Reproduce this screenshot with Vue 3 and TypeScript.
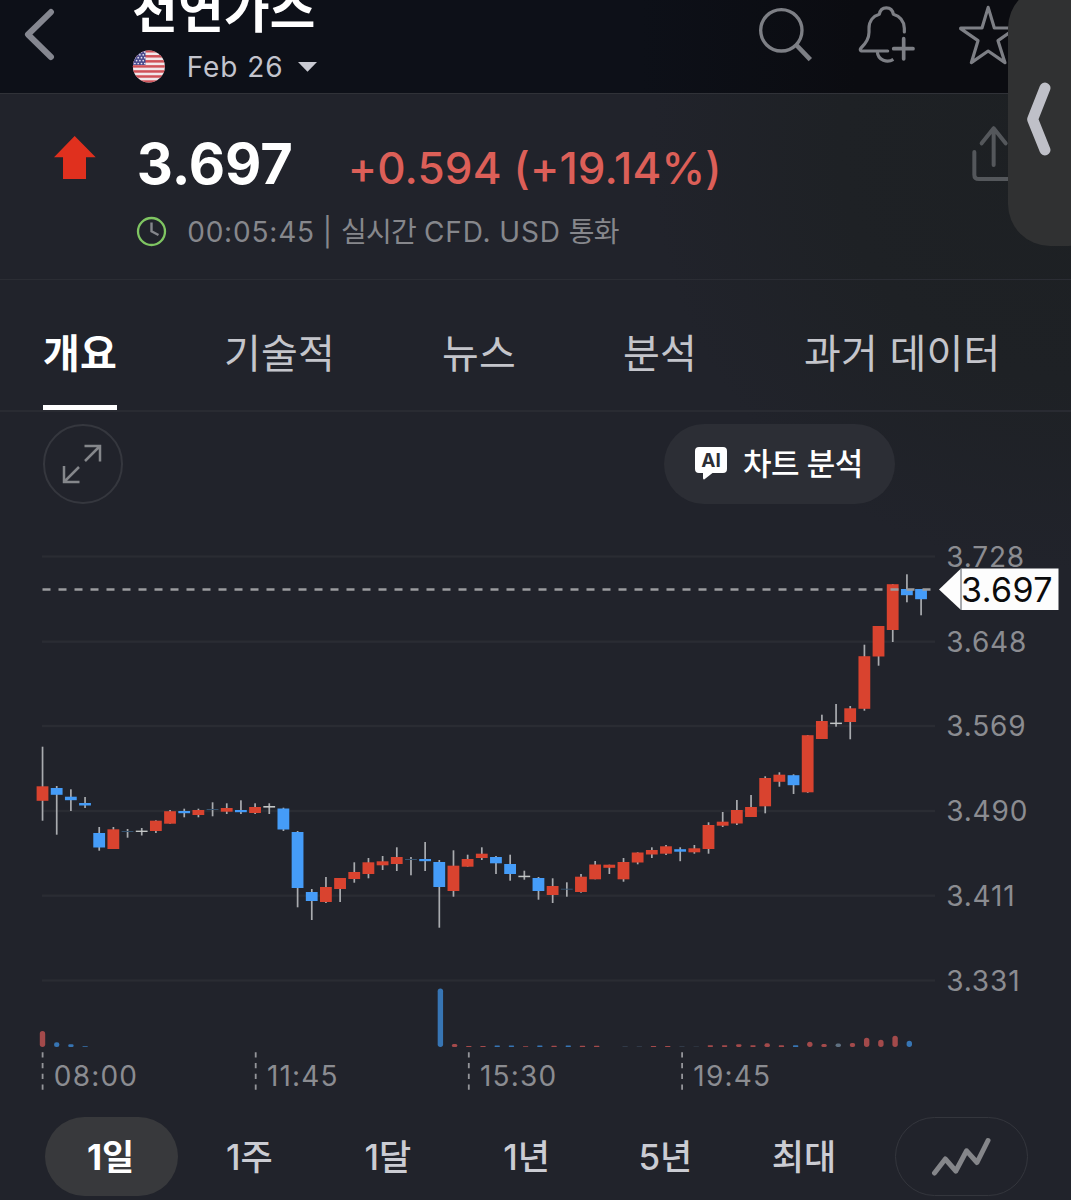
<script setup lang="ts">
type Tone = 'up' | 'down' | 'flat' | 'dim'
type Candle = [high: number, top: number, bottom: number, low: number, tone: Tone]
type Volume = [index: number, top: number, tone: Tone]

const tabs = ['개요', '기술적', '뉴스', '분석', '과거 데이터']
const ranges = ['1일', '1주', '1달', '1년', '5년', '최대']

const grid = [
  { y: 556.5, label: '3.728' },
  { y: 641.7, label: '3.648' },
  { y: 726, label: '3.569' },
  { y: 811, label: '3.490' },
  { y: 895.7, label: '3.411' },
  { y: 980.5, label: '3.331' },
]

const times = [
  { x: 42.6, label: '08:00' },
  { x: 255.7, label: '11:45' },
  { x: 468.8, label: '15:30' },
  { x: 682.1, label: '19:45' },
]

const candles: Candle[] = [
  [746.7, 786.3, 800.8, 820.7, 'up'],
  [786, 788, 794.8, 834.7, 'down'],
  [789.3, 796.7, 800.2, 811, 'down'],
  [797, 803, 805.5, 808, 'down'],
  [827, 833, 847.5, 850.7, 'down'],
  [827, 829.3, 849, 849, 'up'],
  [829, 831, 832, 837.7, 'dim'],
  [828, 830.6, 832, 835.5, 'flat'],
  [820.3, 820.7, 831, 833, 'up'],
  [810, 811.2, 823.7, 823.7, 'up'],
  [808.7, 811, 813.2, 817.3, 'down'],
  [808.7, 810, 815, 817.3, 'up'],
  [802.3, 809, 810, 816.3, 'dim'],
  [803.3, 808, 811.7, 814, 'up'],
  [800.3, 810, 812.2, 814, 'down'],
  [803.3, 807, 813, 814, 'up'],
  [803.3, 806, 807.6, 814, 'flat'],
  [807.7, 808.5, 829.5, 831, 'down'],
  [831, 832, 888, 907.3, 'down'],
  [889, 892, 901, 920, 'down'],
  [877, 887, 902, 903, 'up'],
  [878, 878, 889, 902, 'up'],
  [862.3, 872, 879, 882.7, 'up'],
  [858, 862.3, 874, 878.3, 'up'],
  [856, 861.3, 865.3, 870, 'up'],
  [847.3, 857, 864, 871, 'up'],
  [857, 859, 860, 875.3, 'dim'],
  [842, 859, 861.2, 871, 'down'],
  [860, 862, 887, 927.7, 'down'],
  [850.3, 865.7, 891, 896.7, 'up'],
  [854.7, 859, 866.7, 866.7, 'up'],
  [847.3, 853.7, 858, 860, 'up'],
  [856, 857, 863.3, 874, 'down'],
  [854.7, 864, 874, 880.7, 'down'],
  [870.7, 875.7, 877.2, 879.7, 'flat'],
  [877, 878, 891, 899.7, 'down'],
  [878.3, 886, 895, 903, 'up'],
  [882.3, 888.7, 889.7, 896.7, 'dim'],
  [874, 876.7, 892, 892.7, 'up'],
  [861, 864.5, 879.3, 879.3, 'up'],
  [864.7, 864.7, 867.8, 874, 'up'],
  [858, 862, 879.3, 881.7, 'up'],
  [852.3, 852.5, 862.5, 864.3, 'up'],
  [847.3, 850, 854.5, 858, 'up'],
  [845, 846.3, 853.7, 855, 'up'],
  [847.3, 849.2, 851.7, 861.2, 'down'],
  [845, 848.3, 852.3, 853.7, 'up'],
  [822.3, 825, 849, 853.7, 'up'],
  [812, 821.7, 825.7, 827, 'up'],
  [800, 810, 823.5, 825, 'up'],
  [795, 807, 817, 817, 'up'],
  [776.3, 778, 806.3, 813.3, 'up'],
  [772.3, 774.7, 781.8, 786.7, 'up'],
  [774.3, 775.2, 785.2, 794, 'down'],
  [735, 735.2, 792.3, 792.8, 'up'],
  [714.7, 721, 739, 739, 'up'],
  [704, 722.6, 724.1, 726.7, 'flat'],
  [706, 708.3, 722, 739.3, 'up'],
  [644.7, 656.2, 708.8, 710.7, 'up'],
  [626, 626, 656.5, 665.7, 'up'],
  [584, 584.2, 630, 642, 'up'],
  [574.3, 589, 595.2, 602.3, 'down'],
  [589, 589, 599.2, 615.3, 'down'],
]

const volumes: Volume[] = [
  [0, 1031, 'up'], [1, 1042.3, 'down'], [2, 1044.3, 'down'], [3, 1046.2, 'down'],
  [28, 988.5, 'down'], [29, 1044, 'up'], [30, 1046, 'up'], [31, 1046, 'up'],
  [32, 1045.6, 'down'], [33, 1045.6, 'down'], [34, 1046.2, 'up'], [35, 1045.6, 'down'],
  [36, 1045.8, 'up'], [37, 1045.6, 'down'], [38, 1045.8, 'up'], [39, 1045.8, 'up'],
  [41, 1046.3, 'dim'], [42, 1046.3, 'dim'], [43, 1045.9, 'up'], [44, 1046, 'up'],
  [45, 1046.2, 'dim'], [46, 1046.4, 'dim'], [47, 1045.2, 'up'], [48, 1045.2, 'up'],
  [49, 1044.2, 'up'], [50, 1045.2, 'up'], [51, 1043.3, 'up'], [52, 1045.3, 'up'],
  [53, 1045.3, 'down'], [54, 1041.7, 'up'], [55, 1044, 'up'], [56, 1043.6, 'flat'],
  [57, 1043, 'up'], [58, 1037.7, 'up'], [59, 1039.7, 'up'], [60, 1035.7, 'up'],
  [61, 1040.8, 'down'],
]

const volumeBase = 1047
const candleX = (i: number): number => 42.5 + i * 14.17
const volumeX = (i: number): number => 42.5 + i * 14.21
const volumeRadius = (top: number): number => Math.min(2.7, (volumeBase - top) / 2)
</script>

<template>
  <main class="screen">
    <header class="topbar">
      <svg class="back" viewBox="72 24 94 158" width="31.3" height="52.7">
        <path d="M153 36 84 103.500 153 171" />
      </svg>
      <div class="heading">
        <h1>천연가스</h1>
        <div class="contract">
          <svg class="flag" width="33" height="33" viewBox="0 0 33 33">
            <defs><clipPath id="flag-round"><circle cx="16.900" cy="16.500" r="16" /></clipPath></defs>
            <g clip-path="url(#flag-round)">
              <rect width="33" height="33" fill="#f1e8ea" />
              <rect v-for="n in 7" :key="n" x="0" :y="(n - 1) * 5.05" width="33" height="2.500" fill="#cf5157" />
              <rect width="13.500" height="15" fill="#4a4b8c" />
              <template v-for="r in 5" :key="r">
                <circle v-for="c in 4" :key="c" :cx="c * 3.3 - (r % 2 ? 0.4 : 2)" :cy="r * 2.9 - 1" r="0.850" fill="#e8e6f2" />
              </template>
            </g>
          </svg>
          <span class="month">Feb 26</span>
          <svg class="caret" width="19" height="10" viewBox="0 0 19 10"><path d="M0 0H19L9.500 9.700Z" /></svg>
        </div>
      </div>
      <div class="actions">
        <svg viewBox="114 14 168 180" width="56" height="60">
          <circle cx="184" cy="90" r="62" stroke-width="10" />
          <path d="M229 134 271 178" stroke-width="14" />
        </svg>
        <svg viewBox="412 14 176 180" width="58.7" height="60">
          <path class="round" stroke-width="9.500" d="M504 152H425Q419 150 424 143C440 128 448 116 448 96V84C448 62 461 47 479 42C481 29 490 22.500 500 22.500S519 29 521 42C541 48 553 62 554 84V95" />
          <path stroke-width="9.500" d="M473 155C475 180 503 189 521 177" />
          <path class="round" stroke-width="11" d="M552 115V176M522 145H580" />
        </svg>
        <svg viewBox="714 14 180 180" width="60" height="60">
          <path class="round" stroke-width="9.500" d="M804.500 21 823 83H888L834 121 855 187 804.500 152 754 187 774 121 722 85 722 83H786Z" />
        </svg>
      </div>
    </header>

    <section class="quote">
      <svg class="arrow" viewBox="162 408 125 129" width="41.7" height="43"><path d="M224 408 287 472H258V537H189V472H162Z" /></svg>
      <div class="figures">
        <div class="price-row">
          <strong class="last">3.697</strong>
          <span class="change">+0.594 (+19.14%)</span>
        </div>
        <div class="meta">
          <svg width="31" height="31" viewBox="0 0 31 31">
            <circle cx="15.500" cy="15.500" r="13.500" fill="none" stroke="#7fc562" stroke-width="2.300" />
            <path d="M15.500 6.500V15.300L22.500 19" fill="none" stroke="#85868c" stroke-width="2.400" />
          </svg>
          <p>00:05:45 | <span>실시간</span> CFD. USD <span>통화</span></p>
        </div>
      </div>
      <svg class="share" viewBox="756 376 130 170" width="43.3" height="56.7">
        <path d="M821 386V496M785 431 821 386 857 431M763 457V525Q763 538 777 538H865Q879 538 879 525V457" />
      </svg>
    </section>

    <nav class="tabs">
      <a v-for="(tab, i) in tabs" :key="tab" :class="{ active: i === 0 }">{{ tab }}</a>
    </nav>

    <div class="tools">
      <button class="expand" type="button">
        <svg width="40" height="40" viewBox="0 0 40 40"><path d="M23 17 38 2M22.500 2H38V17.500M17 23 2.500 37.500M2 22V38H17.500" /></svg>
      </button>
      <button class="ai" type="button">
        <svg width="32" height="33" viewBox="0 0 32 33">
          <path fill="#fff" d="M4 0H28Q32 0 32 4V22Q32 26 28 26H17.500L9.500 32.300Q8 33 8 31V26H4Q0 26 0 22V4Q0 0 4 0Z" />
          <text x="16" y="20" text-anchor="middle">AI</text>
        </svg>
        <span>차트 분석</span>
      </button>
    </div>

    <svg class="chart" width="1071" height="597" viewBox="0 520 1071 597">
      <g v-for="line in grid" :key="line.label">
        <rect x="42" :y="line.y - 1.2" width="893" height="2.400" fill="#2a2c33" />
        <text class="axis" x="946.200" :y="line.y + 10.3">{{ line.label }}</text>
      </g>
      <g v-for="(c, i) in candles" :key="i">
        <rect :x="candleX(i) - 0.8" :y="c[0]" width="1.700" :height="c[3] - c[0]" fill="#a9abaf" />
        <rect :class="c[4]" :x="candleX(i) - 5.9" :y="c[1]" width="11.800" :height="c[2] - c[1]" />
      </g>
      <path class="current" d="M42.500 589.500H931" />
      <g class="volumes">
        <rect
          v-for="v in volumes"
          :key="v[0]"
          :class="v[2]"
          :x="volumeX(v[0]) - 2.7"
          :y="v[1]"
          width="5.400"
          :height="volumeBase - v[1]"
          :rx="volumeRadius(v[1])"
        />
      </g>
      <g v-for="t in times" :key="t.label">
        <path class="tick" :d="`M${t.x} 1052.300V1090.500`" />
        <text class="axis time" :x="t.x + 11.2" y="1086">{{ t.label }}</text>
      </g>
      <path d="M939 589.500 961 568.500H1058.500V610H961Z" fill="#fdfdfd" />
      <path d="M961 568.500V610" stroke="#555960" stroke-width="1" />
      <text class="tag" x="961" y="601.500">3.697</text>
    </svg>

    <div class="ranges">
      <button v-for="(r, i) in ranges" :key="r" type="button" :class="{ active: i === 0 }">{{ r }}</button>
      <button class="kind" type="button">
        <svg width="60" height="40" viewBox="0 0 60 40"><path d="M3.500 36 14.300 22 24.800 34 35.600 13.800 46 25.500 57 3.500" /></svg>
      </button>
    </div>

    <aside class="drawer">
      <svg viewBox="918 246 76 222" width="25.3" height="74"><path d="M975 264 938 358 975 450" /></svg>
    </aside>
  </main>
</template>

<style>
html,
body {
  background: #21232b;
  overflow: hidden;
}
</style>

<style scoped>
.screen {
  position: relative;
  width: 1071px;
  height: 1200px;
  overflow: hidden;
  display: flex;
  flex-direction: column;
  background: radial-gradient(ellipse 420px 420px at 1071px 150px, #1d2023 0%, #1e2125 55%, #21232b 100%);
  font-family: Inter, 'Noto Sans CJK KR', sans-serif;
  color: #c9cad0;
}
svg { display: block; flex: none; }
button { border: 0; background: none; padding: 0; margin: 0; font: inherit; color: inherit; }

.topbar {
  flex: none;
  display: flex;
  height: 93px;
  background: linear-gradient(90deg, #0d1018 0%, #0d1018 60%, #0b0c11 80%);
  border-bottom: 1px solid #303238;
}
.back { margin: 8px 0 0 24px; }
.back path { fill: none; stroke: #858790; stroke-width: 18; stroke-linecap: round; stroke-linejoin: round; }
.heading { margin-left: 77px; width: 300px; }
h1 { margin: -26px 0 0; height: 76px; line-height: 73px; font-size: 49.500px; letter-spacing: 0.300px; font-weight: 700; color: #fff; }
.contract { display: flex; align-items: center; height: 33px; }
.month { margin-left: 21.500px; width: 112px; font-size: 28px; letter-spacing: 0.900px; color: #c3c4cd; white-space: nowrap; }
.caret { margin-left: -0.500px; }
.caret path { fill: #c9cad2; }
.actions { display: flex; margin: 4.700px 0 0 325.700px; }
.actions svg + svg { margin-left: 43.300px; }
.actions svg + svg + svg { margin-left: 42px; }
.actions svg { fill: none; stroke: #7d7f85; }
.round { stroke-linecap: round; stroke-linejoin: round; }

.quote {
  flex: none;
  display: flex;
  height: 185px;
  border-bottom: 1px solid #2b2d34;
}
.arrow { margin: 42px 0 0 54px; }
.arrow path { fill: #e0301e; }
.figures { margin-left: 40px; width: 836px; }
.price-row { display: flex; align-items: baseline; height: 112px; padding: 32px 0 0 1px; box-sizing: border-box; white-space: nowrap; }
.last { width: 211px; font-size: 56px; line-height: 76px; font-weight: 700; color: #fff; }
.change { font-size: 44px; line-height: 60px; letter-spacing: 0.130px; color: #dc5f58; font-weight: 450; }
.meta { display: flex; align-items: center; height: 51px; font-size: 28px; letter-spacing: 0.800px; color: #86878c; white-space: nowrap; }
.meta p { margin: -4px 0 0 20.500px; word-spacing: -0.700px; }
.meta span { letter-spacing: -0.700px; }
.share { margin-top: 31.300px; }
.share path { fill: none; stroke: #54575b; stroke-width: 12; stroke-linecap: round; stroke-linejoin: round; }

.tabs {
  flex: none;
  display: flex;
  gap: 107px;
  height: 130px;
  padding: 0 0 0 43px;
  border-bottom: 2px solid #292b32;
  font-size: 40px;
  letter-spacing: 0.200px;
  white-space: nowrap;
}
.tabs a { display: flex; align-items: center; height: 130px; box-sizing: border-box; padding-top: 16px; border-bottom: 5px solid transparent; color: #c4c5cb; }
.tabs a.active { color: #fff; font-weight: 700; border-color: #fff; }

.tools { flex: none; display: flex; justify-content: space-between; height: 79.500px; margin: 12px 0 16.500px; padding: 0 176px 0 43px; }
.expand { display: flex; align-items: center; justify-content: center; width: 79.500px; box-sizing: border-box; border: 2px solid #35373e; border-radius: 50%; }
.expand path { fill: none; stroke: #85878b; stroke-width: 2.500; }
.expand svg { margin-left: -1px; }
.ai { display: flex; align-items: center; width: 231.500px; box-sizing: border-box; padding-left: 31.500px; border-radius: 40px; background: #2c2e35; color: #fff; font-size: 31px; letter-spacing: -0.500px; font-weight: 500; white-space: nowrap; }
.ai text { font: 700 19px Inter, sans-serif; letter-spacing: 0; fill: #2c2e35; }
.ai span { margin: -5px 0 0 16px; }

.chart { flex: none; }
.axis { font-size: 28px; letter-spacing: 0.850px; fill: #8b8c91; }
.time { letter-spacing: 1.200px; }
.tag { font-size: 34px; letter-spacing: 0.400px; fill: #0b0b0c; }
.up { fill: #d9432f; }
.down { fill: #459cf8; }
.flat { fill: #c3c6c6; }
.dim { fill: #36536f; }
.volumes .up { fill: #a34a4b; }
.volumes .down { fill: #3775b4; }
.volumes .flat { fill: #5f7081; }
.volumes .dim { fill: #364251; }
.current { fill: none; stroke: #9b9c9f; stroke-width: 2.400; stroke-dasharray: 8 8; }
.tick { stroke: #94959a; stroke-width: 1.800; stroke-dasharray: 5.300 5.400; }

.ranges { flex: none; display: flex; gap: 5.500px; padding-left: 45px; height: 79px; font-size: 35px; font-weight: 500; }
.ranges button { width: 133.200px; height: 79px; padding: 0 2px 4px 0; border-radius: 40px; color: #cbccd3; }
.ranges button.active { background: #38393c; color: #fff; font-weight: 700; }
.ranges .kind { margin-left: 17.500px; padding: 0; box-sizing: border-box; border: 1.500px solid #34363d; display: flex; align-items: center; justify-content: center; }
.kind path { fill: none; stroke: #85868a; stroke-width: 5; stroke-linecap: round; stroke-linejoin: round; }

.drawer { position: absolute; left: 1007.500px; top: -14px; width: 100px; height: 260px; border-radius: 42px; background: #303132; }
.drawer svg { margin: 96px 0 0 18.500px; }
.drawer path { fill: none; stroke: #bfc0c8; stroke-width: 33; stroke-linecap: round; stroke-linejoin: round; }
</style>
